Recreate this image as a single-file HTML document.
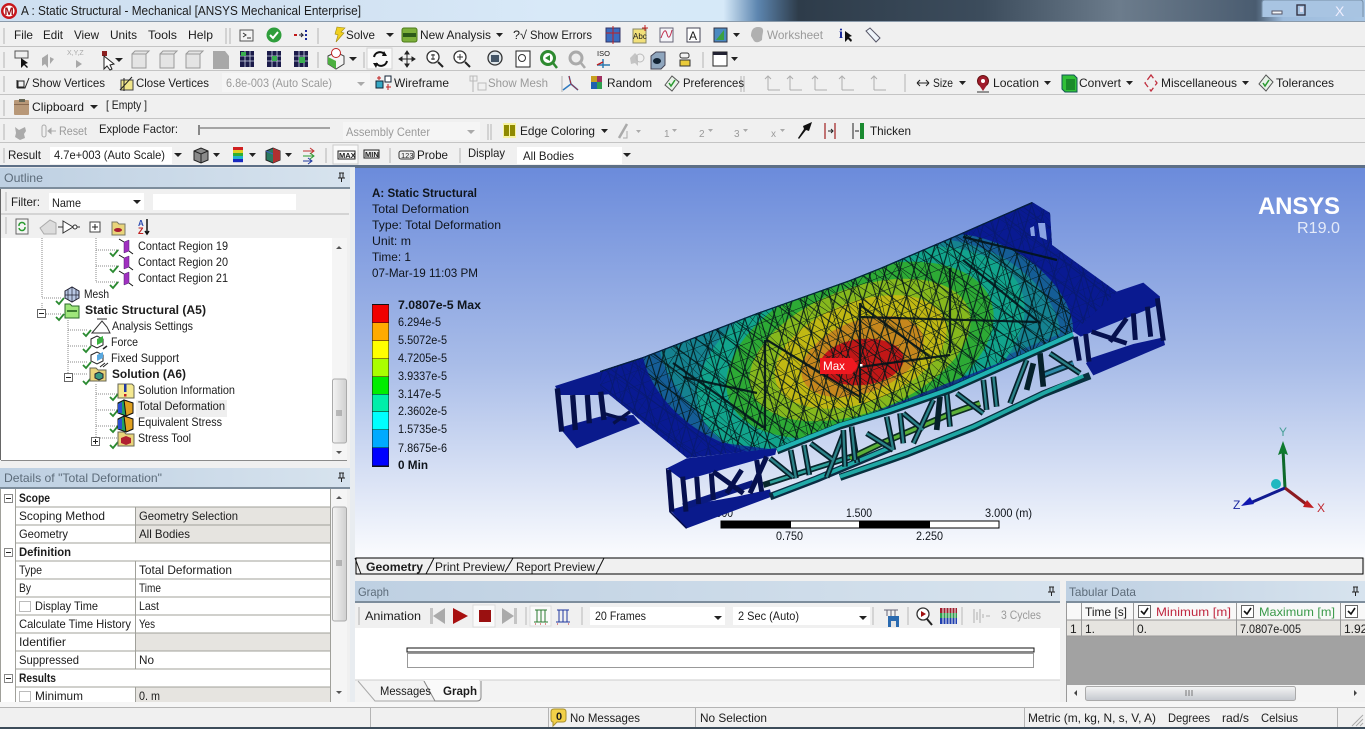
<!DOCTYPE html>
<html><head><meta charset="utf-8"><title>A : Static Structural - Mechanical</title>
<style>
html,body{margin:0;padding:0;width:1365px;height:729px;overflow:hidden;background:#f0f0f0}
svg{display:block;position:absolute;left:0;top:0}
text{font-family:"Liberation Sans",sans-serif;font-size:12px;fill:#1c1c1c}
.g{fill:#9a9a9a}.h{fill:#5d6c7a}.b{font-weight:bold}.d{fill:#10151c}
</style></head><body>
<svg width="1365" height="729" viewBox="0 0 1365 729" xmlns="http://www.w3.org/2000/svg">
<defs>
<linearGradient id="tb" x1="0" x2="1" y1="0" y2="0"><stop offset="0" stop-color="#cfe0f1"/><stop offset=".25" stop-color="#d2e2f2"/><stop offset=".4" stop-color="#d8e9f8"/><stop offset=".53" stop-color="#d6e9f8"/><stop offset=".555" stop-color="#5d86b0"/><stop offset=".585" stop-color="#2e3c4a"/><stop offset=".72" stop-color="#3c4c5c"/><stop offset=".82" stop-color="#6c7c8c"/><stop offset=".92" stop-color="#4a5c70"/><stop offset=".94" stop-color="#9dbbdc"/><stop offset="1" stop-color="#a9c6e4"/></linearGradient>
<linearGradient id="hd" x1="0" x2="1" y1="0" y2="0"><stop offset="0" stop-color="#bed0e2"/><stop offset="1" stop-color="#d7e3ee"/></linearGradient>
<linearGradient id="vp" x1="0" x2="0" y1="0" y2="1"><stop offset="0" stop-color="#6b8bdb"/><stop offset=".5" stop-color="#a8bce8"/><stop offset="1" stop-color="#fbfcfe"/></linearGradient>
<linearGradient id="sb" x1="0" x2="1" y1="0" y2="0"><stop offset="0" stop-color="#f4f4f4"/><stop offset="1" stop-color="#cfcfcf"/></linearGradient>
<linearGradient id="sh" x1="0" x2="0" y1="0" y2="1"><stop offset="0" stop-color="#f4f4f4"/><stop offset="1" stop-color="#c4c8ce"/></linearGradient>
<pattern id="m1" width="17" height="14" patternUnits="userSpaceOnUse" patternTransform="rotate(-21) skewX(25)"><path d="M0 0H17M0 0V14M0 14L17 0" stroke="#04181a" stroke-width=".8" fill="none"/></pattern>
<pattern id="m2" width="23" height="19" patternUnits="userSpaceOnUse" patternTransform="rotate(33)"><path d="M0 0H23M0 0V19M0 0L23 19" stroke="#04181a" stroke-width=".9" fill="none"/></pattern>
<pattern id="m3" width="29" height="25" patternUnits="userSpaceOnUse" patternTransform="rotate(78)"><path d="M0 0H29M0 25L29 0" stroke="#04181a" stroke-width=".9" fill="none"/></pattern>
<clipPath id="dk"><path d="M600,371L643,357L757,313L850,280L880,268L957,235L1032,202L1050,213L1052,245L1117,292L1073,332L950,387L890,408L840,423L777,448L687,458L600,387Z"/></clipPath>
</defs>

<!-- title bar -->
<rect width="1365" height="21" fill="url(#tb)"/>
<rect x="0" y="21" width="1365" height="1" fill="#8a9aaa"/>
<circle cx="9" cy="11" r="8" fill="#c8161c"/><circle cx="9" cy="11" r="5.500" fill="#fff"/><text x="4.500" y="15" class="b" style="font-size:11px;fill:#a01016">M</text>
<text x="21" y="15" textLength="340" lengthAdjust="spacingAndGlyphs" style="font-size:13px">A : Static Structural - Mechanical [ANSYS Mechanical Enterprise]</text>
<path d="M1262 17V3q0-3 3-3h95q3 0 3 3v14" fill="#a8c4e2" stroke="#7890a8"/>
<rect x="1272" y="11" width="10" height="3" fill="#f2f5f8" stroke="#556"/>
<rect x="1297" y="5" width="8" height="10" fill="none" stroke="#334" stroke-width="1.400"/><rect x="1300" y="7" width="3" height="5" fill="#dde"/>
<text x="1335" y="16" style="font-size:14px;fill:#eef">X</text>

<!-- toolbar separators -->
<g fill="#c4c4c4"><rect y="46" width="1365" height="1"/><rect y="70" width="1365" height="1"/><rect y="94" width="1365" height="1"/><rect y="118" width="1365" height="1"/><rect y="142" width="1365" height="1"/></g>
<rect x="0" y="165" width="1365" height="3" fill="#5d6f86"/>
<rect x="0" y="167" width="355" height="2" fill="#e2e6ea"/>
<g fill="none" stroke="#b4b4b4"><path d="M4 28V44M4 52V68M4 76V92M4 100V116M4 124V140M4 148V163M226 28V44M230 28V44M318 52V68M364 52V68M367 52V68M473 76V92M362 124V140M326 148V163M390 148V163M318 28V44M460 124V140M488 124V140M491 124V140M460 148V163M741 76V92M744 76V92M703 52V68M562 76V92"/></g>

<!-- row 1 -->
<text x="14" y="39" textLength="19" lengthAdjust="spacingAndGlyphs">File</text><text x="43" y="39" textLength="20" lengthAdjust="spacingAndGlyphs">Edit</text><text x="74" y="39" textLength="25" lengthAdjust="spacingAndGlyphs">View</text><text x="110" y="39" textLength="27" lengthAdjust="spacingAndGlyphs">Units</text><text x="148" y="39" textLength="29" lengthAdjust="spacingAndGlyphs">Tools</text><text x="188" y="39" textLength="25" lengthAdjust="spacingAndGlyphs">Help</text>
<rect x="240" y="30" width="13" height="11" fill="#f4f4f4" stroke="#555"/><path d="M243 33l3 2-3 2M247 38h4" stroke="#333" fill="none"/>
<circle cx="274" cy="35" r="7.500" fill="#2f9e3c"/><path d="M270 35l3 3 5-6" stroke="#fff" stroke-width="2" fill="none"/>
<path d="M294 35h3" stroke="#c01818" stroke-width="2"/><path d="M299 35h4l-2-2M303 35l-2 2" stroke="#223" fill="none"/><path d="M306 30v2M306 34v2M306 38v2" stroke="#1a2a9a" stroke-width="2"/>
<path d="M337 27l8 1-4 4 3 1-8 9 2-7-3-1z" fill="#f0d020" stroke="#a08a10" stroke-width=".6"/>
<text x="346" y="39" textLength="29" lengthAdjust="spacingAndGlyphs">Solve</text><path d="M386 33h8l-4 4z" fill="#222"/>
<rect x="402" y="28" width="15" height="14" rx="2" fill="#7cb03a" stroke="#4c7a1a"/><rect x="403" y="33" width="13" height="4" fill="#2c5a18"/>
<text x="420" y="39" textLength="71" lengthAdjust="spacingAndGlyphs">New Analysis</text><path d="M496 33h7l-3.500 4z" fill="#222"/>
<text x="513" y="39" textLength="14" lengthAdjust="spacingAndGlyphs">?√</text><text x="530" y="39" textLength="62" lengthAdjust="spacingAndGlyphs">Show Errors</text>
<rect x="606" y="28" width="14" height="14" fill="#3a6cc0" stroke="#336"/><path d="M606 33h14M613 26v18" stroke="#c02020"/>
<rect x="633" y="29" width="13" height="14" fill="#f2e07a" stroke="#886"/><text x="633" y="39" style="font-size:8px">Abc</text><path d="M645 25v6M642 28h6" stroke="#c02020"/>
<rect x="660" y="28" width="13" height="14" fill="#f4f4f8" stroke="#667"/><path d="M661 38q4-12 6-4t5-4" stroke="#c03050" fill="none"/>
<rect x="687" y="28" width="13" height="14" fill="#fff" stroke="#445"/><text x="689" y="40" style="font-size:12px">A</text>
<rect x="714" y="28" width="13" height="14" fill="#4a8ac0" stroke="#334"/><path d="M716 40l8-10v10z" fill="#3aa040"/><path d="M733 33h7l-3.500 4z" fill="#222"/>
<path d="M751 36q0-9 7-9 6 0 5 5-1 4-1 8-5 4-8 1z" fill="#b0b0b0"/>
<text x="767" y="39" textLength="56" lengthAdjust="spacingAndGlyphs" class="g">Worksheet</text>
<text x="839" y="38" class="b" style="font-size:14px;fill:#1a2a9a;font-family:'Liberation Serif',serif">i</text><path d="M845 31l0 11 3-3 3 3 1-2-3-3 3-1z" fill="#111"/>
<path d="M866 31l4-3 10 10-4 4z" fill="#eef4fa" stroke="#556"/>

<!-- row 2 -->
<rect x="15" y="51" width="13" height="7" fill="#eee" stroke="#555"/><path d="M21 58v10l3-3 3 3 1-1-3-3 3-1z" fill="#111"/>
<path d="M42 58l6-4v14l-3-4-3 2z M50 57l4 2-4 5z" fill="#a8a8a8"/>
<text x="67" y="55" style="font-size:7px;fill:#aaa">X,Y,Z</text><path d="M76 60v8l6-4z" fill="#a8a8a8"/>
<rect x="102" y="51" width="5" height="5" fill="#8c2020"/><path d="M104 56v13l3-3 3 4 2-1-2-4 4-1z" fill="#fff" stroke="#222"/><path d="M115 58h8l-4 4z" fill="#222"/>
<g fill="#e4e4e4" stroke="#9a9a9a"><path d="M132 54h14v14h-14zM132 54l3-3h14l-3 3"/><path d="M160 54h14v14h-14zM160 54l3-3h14l-3 3"/><path d="M186 54h14v14h-14zM186 54l3-3h14l-3 3"/></g>
<path d="M213 51h12l4 5v13h-16z" fill="#a8a8a8"/>
<g fill="#1b1b4a"><rect x="240" y="51" width="14" height="16"/><rect x="267" y="51" width="14" height="16"/><rect x="294" y="51" width="14" height="16"/></g>
<g stroke="#cfd6e8" stroke-width=".8"><path d="M240 56h14M240 61h14M245 51v16M250 51v16M267 56h14M267 61h14M272 51v16M277 51v16M294 56h14M294 61h14M299 51v16M304 51v16"/></g>
<rect x="241" y="52" width="5" height="4" fill="#3ab050"/><rect x="272" y="56" width="5" height="5" fill="#3ab050"/><rect x="299" y="57" width="6" height="6" fill="#3ab050"/>
<path d="M328 56l8-4 8 4v8l-8 5-8-5z" fill="#f4f4f4" stroke="#444"/><path d="M328 57l8 4v8l-8-5z" fill="#4cb040"/><circle cx="336" cy="53" r="4.500" fill="#fff" stroke="#c02020"/><path d="M349 57h8l-4 4z" fill="#222"/>
<rect x="367" y="48" width="25" height="21" fill="#fafafa" stroke="#d4d4d4"/>
<path d="M374 57a6 6 0 0 1 11-2M387 61a6 6 0 0 1-11 2" fill="none" stroke="#111" stroke-width="2"/><path d="M384 51l3 5-5 0zM376 68l-3-5 5 0z" fill="#111"/>
<path d="M407 51v16M399 59h16M407 51l-2 3h4zM407 67l-2-3h4zM399 59l3-2v4zM415 59l-3-2v4z" stroke="#222" fill="#222"/>
<circle cx="433" cy="57" r="6" fill="#fff" stroke="#333" stroke-width="1.300"/><path d="M438 62l5 5" stroke="#222" stroke-width="2"/><path d="M433 54v6M431 55h4M431 59h4" stroke="#333"/>
<circle cx="460" cy="57" r="6" fill="#fff" stroke="#333" stroke-width="1.300"/><path d="M465 62l5 5" stroke="#222" stroke-width="2"/><path d="M457 57h6M460 54v6" stroke="#333"/>
<circle cx="495" cy="58" r="7" fill="#dfe6ea" stroke="#333" stroke-width="1.300"/><rect x="491" y="55" width="8" height="7" fill="#456"/>
<rect x="516" y="51" width="14" height="16" fill="#fff" stroke="#222"/><circle cx="522" cy="58" r="3.500" fill="none" stroke="#333"/>
<circle cx="548" cy="58" r="6.500" fill="#fff" stroke="#2e8a30" stroke-width="3"/><path d="M545 58l5-3v6z" fill="#2e8a30"/><path d="M553 63l4 5" stroke="#2e8a30" stroke-width="2.500"/>
<circle cx="576" cy="58" r="6" fill="#eee" stroke="#aaa" stroke-width="3"/><path d="M581 63l4 5" stroke="#aaa" stroke-width="2.500"/>
<text x="597" y="56" style="font-size:7.500px">ISO</text><path d="M603 59v9M597 65h13" stroke="#2a7ab0" stroke-width="1.500"/><path d="M597 65l6-3" stroke="#c02020" stroke-width="1.500"/>
<path d="M630 58l5-5 3 3v10l-3-3-4 1z" fill="#c4c4c4"/><circle cx="640" cy="58" r="4" fill="none" stroke="#bbb"/>
<path d="M651 56l5-4h9v13l-4 4h-10z" fill="#8fa6be" stroke="#445"/><ellipse cx="657" cy="61" rx="4" ry="3" fill="#123"/>
<rect x="680" y="53" width="9" height="5" rx="2" fill="#f4f4f4" stroke="#333"/><rect x="680" y="60" width="10" height="6" fill="#eacb3a" stroke="#333"/>
<rect x="713" y="52" width="14" height="14" fill="#fff" stroke="#222"/><rect x="713" y="52" width="14" height="3" fill="#223"/><path d="M731 57h7l-3.500 4z" fill="#222"/>

<!-- row 3 -->
<path d="M17 88h8l4-10M17 80v8" stroke="#222" fill="none"/><rect x="18" y="81" width="6" height="6" fill="none" stroke="#222"/>
<text x="32" y="87" textLength="73" lengthAdjust="spacingAndGlyphs">Show Vertices</text>
<rect x="121" y="80" width="12" height="10" fill="#f0e58a" stroke="#444"/><path d="M120 90l12-13M124 78v13" stroke="#222"/>
<text x="136" y="87" textLength="73" lengthAdjust="spacingAndGlyphs">Close Vertices</text>
<rect x="222" y="73" width="148" height="19" fill="#f5f5f5"/><text x="226" y="87" textLength="106" lengthAdjust="spacingAndGlyphs" class="g">6.8e-003 (Auto Scale)</text><path d="M357 82h8l-4 4z" fill="#aaa"/>
<rect x="376" y="81" width="7" height="7" fill="#35a8c4" stroke="#123"/><rect x="385" y="76" width="6" height="6" fill="#fff" stroke="#123"/><path d="M377 78h4M379 76v4M386 87h5M388 84v6" stroke="#c02020"/>
<text x="394" y="87" textLength="55" lengthAdjust="spacingAndGlyphs">Wireframe</text>
<rect x="470" y="76" width="7" height="5" fill="none" stroke="#bbb"/><rect x="478" y="83" width="8" height="7" fill="none" stroke="#bbb"/>
<text x="488" y="87" textLength="60" lengthAdjust="spacingAndGlyphs" class="g">Show Mesh</text>
<path d="M569 76l2 8M571 84l-8 6M571 84l7 6" stroke="#2e7ac0" stroke-width="1.500"/><path d="M571 84l-2-8M571 84l7 6" stroke="#c02020" stroke-width=".8"/>
<rect x="591" y="76" width="6" height="6" fill="#c8a020"/><rect x="597" y="76" width="5" height="6" fill="#a03060"/><rect x="591" y="82" width="6" height="7" fill="#2060b0"/><rect x="597" y="82" width="5" height="7" fill="#30a050"/>
<text x="607" y="87" textLength="45" lengthAdjust="spacingAndGlyphs">Random</text>
<path d="M672 76l7 6-7 9-7-6z" fill="#e8f2e8" stroke="#555"/><path d="M669 83l2 3 4-6" stroke="#2a9a30" stroke-width="1.500" fill="none"/>
<text x="683" y="87" textLength="61" lengthAdjust="spacingAndGlyphs">Preferences</text>
<g fill="none" stroke="#aeaeae"><path d="M768 76v14M768 90h12M790 76v14M790 90h12M815 76v14M815 90h12M842 76v14M842 90h12M874 76v14M874 90h12"/><path d="M765 79l3-3 3 3M787 79l3-3 3 3M812 79l3-3 3 3M839 79l3-3 3 3M871 79l3-3 3 3"/></g>
<path d="M905 74v18" stroke="#b4b4b4"/>
<path d="M917 83h12M917 83l3-3M917 83l3 3M929 83l-3-3M929 83l-3 3" stroke="#222" fill="none"/>
<text x="933" y="87" textLength="20" lengthAdjust="spacingAndGlyphs">Size</text><path d="M959 81h7l-3.500 4z" fill="#222"/>
<circle cx="983" cy="81" r="5.500" fill="#a01c2c" stroke="#611"/><path d="M979 85l4 6 4-6z" fill="#a01c2c"/><circle cx="983" cy="81" r="2" fill="#fff"/><path d="M977 92h12" stroke="#333"/>
<text x="993" y="87" textLength="46" lengthAdjust="spacingAndGlyphs">Location</text><path d="M1044 81h7l-3.500 4z" fill="#222"/>
<path d="M1062 75h12l3 3v14h-12l-3-3z" fill="#30c038" stroke="#155"/><rect x="1066" y="79" width="9" height="11" fill="#198a2a"/>
<text x="1079" y="87" textLength="42" lengthAdjust="spacingAndGlyphs">Convert</text><path d="M1126 81h7l-3.500 4z" fill="#222"/>
<path d="M1151 75l-6 8 6 8 6-8z" fill="none" stroke="#c03040" stroke-width="1.300" stroke-dasharray="6 3"/>
<text x="1161" y="87" textLength="76" lengthAdjust="spacingAndGlyphs">Miscellaneous</text><path d="M1242 81h7l-3.500 4z" fill="#222"/>
<path d="M1266 75l7 7-7 9-7-7z" fill="#e8f2e8" stroke="#555"/><path d="M1263 83l2 3 4-6" stroke="#2a9a30" stroke-width="1.500" fill="none"/>
<text x="1276" y="87" textLength="58" lengthAdjust="spacingAndGlyphs">Tolerances</text>

<!-- row 4 -->
<rect x="14" y="100" width="15" height="15" rx="1" fill="#b89878"/><rect x="19" y="99" width="6" height="3" fill="#665"/><rect x="14" y="104" width="15" height="1" fill="#8a6a50"/>
<text x="32" y="111" textLength="52" lengthAdjust="spacingAndGlyphs">Clipboard</text><path d="M90 105h8l-4 4z" fill="#222"/>
<text x="106" y="109" textLength="41" lengthAdjust="spacingAndGlyphs">[ Empty ]</text>

<!-- row 5 -->
<path d="M15 127l4 3 6-3 1 4-2 3 1 4-5 2-5-3 1-4z" fill="#aaa"/>
<rect x="42" y="125" width="4" height="12" rx="2" fill="none" stroke="#aaa"/><path d="M48 131h8M48 131l3-2.500v5z" stroke="#aaa" fill="#aaa"/>
<text x="59" y="135" textLength="28" lengthAdjust="spacingAndGlyphs" class="g">Reset</text>
<text x="99" y="133" textLength="79" lengthAdjust="spacingAndGlyphs">Explode Factor:</text>
<path d="M199 128h131" stroke="#8a8a8a" stroke-width="1.500"/><path d="M199 125v10" stroke="#888" stroke-width="2"/>
<rect x="343" y="122" width="137" height="18" fill="#f5f5f5"/><text x="346" y="136" textLength="84" lengthAdjust="spacingAndGlyphs" class="g">Assembly Center</text><path d="M467 130h8l-4 4z" fill="#aaa"/>
<rect x="503" y="123" width="13" height="15" fill="#f7f3a0"/><rect x="504" y="125" width="5" height="11" fill="#8f8a00"/><rect x="510" y="125" width="5" height="11" fill="#8f8a00"/>
<text x="520" y="135" textLength="75" lengthAdjust="spacingAndGlyphs">Edge Coloring</text><path d="M601 129h7l-3.500 4z" fill="#222"/>
<path d="M619 138l8-14" stroke="#aaa" stroke-width="2.500"/><path d="M627 131v7h-4" stroke="#aaa" fill="none"/><path d="M636 130h5l-2.500 3z" fill="#aaa"/>
<text x="664" y="137" class="g" style="font-size:10px">1</text><text x="699" y="137" class="g" style="font-size:10px">2</text><text x="734" y="137" class="g" style="font-size:10px">3</text><text x="771" y="137" class="g" style="font-size:10px">x</text>
<path d="M672 129h5l-2.500 3zM708 129h5l-2.500 3zM743 129h5l-2.500 3zM780 129h5l-2.500 3z" fill="#aaa"/>
<path d="M798 138l6-9-1-3 9-4-3 9-3-1-7 9z" fill="#111"/>
<path d="M825 123v16M835 123v16" stroke="#a02020" stroke-width="1.200"/><path d="M828 131h5" stroke="#222"/><path d="M831 129l2 2-2 2" stroke="#222" fill="none"/>
<path d="M853 123v16" stroke="#222"/><rect x="860" y="123" width="4" height="16" fill="#1a8a30"/><path d="M855 131h4" stroke="#222"/>
<text x="870" y="135" textLength="41" lengthAdjust="spacingAndGlyphs">Thicken</text>

<!-- row 6 -->
<text x="8" y="159" textLength="33" lengthAdjust="spacingAndGlyphs">Result</text>
<rect x="50" y="147" width="122" height="17" fill="#fff"/>
<text x="54" y="159" textLength="111" lengthAdjust="spacingAndGlyphs">4.7e+003 (Auto Scale)</text><path d="M174 153h8l-4 4z" fill="#222"/>
<path d="M194 151l7-3 7 3v9l-7 3-7-3z" fill="#8a8a8a" stroke="#222"/><path d="M194 151l7 3 7-3M201 154v9" stroke="#222" fill="none"/><path d="M213 153h7l-3.500 4z" fill="#222"/>
<rect x="233" y="147" width="10" height="3.200" fill="#d02020"/><rect x="233" y="150" width="10" height="3.200" fill="#e0d020"/><rect x="233" y="153" width="10" height="3.200" fill="#30b030"/><rect x="233" y="156" width="10" height="3.200" fill="#20b0d0"/><rect x="233" y="159" width="10" height="3.200" fill="#1a2ac0"/>
<path d="M249 153h7l-3.500 4z" fill="#222"/>
<path d="M266 151l7-3 7 3v9l-7 3-7-3z" fill="#2a7a60" stroke="#222"/><path d="M273 148v15l7-3v-9z" fill="#b03030"/><path d="M266 151l7 3" stroke="#4060c0"/><path d="M285 153h7l-3.500 4z" fill="#222"/>
<path d="M303 151h11M310 148l4 3-4 3" stroke="#c03030" fill="none"/><path d="M303 156h11M310 153l4 3-4 3" stroke="#2a9a30" fill="none"/><path d="M303 161h9M308 158l4 3-4 3" stroke="#2038a0" fill="none"/>
<rect x="333" y="145" width="25" height="19" fill="#fafafa" stroke="#ccc"/>
<text x="339" y="158" class="b" style="font-size:7.500px">MAX</text><rect x="338" y="151" width="17" height="8" fill="none" stroke="#222"/>
<text x="365" y="157" class="b" style="font-size:7.500px">MIN</text><rect x="364" y="150" width="15" height="8" fill="none" stroke="#222"/>
<rect x="399" y="151" width="15" height="8" rx="2" fill="none" stroke="#333"/><text x="401" y="158" style="font-size:7.500px">123</text>
<text x="417" y="159" textLength="31" lengthAdjust="spacingAndGlyphs">Probe</text>
<text x="468" y="157" textLength="37" lengthAdjust="spacingAndGlyphs">Display</text>
<rect x="517" y="147" width="105" height="17" fill="#fff"/><text x="523" y="160" textLength="51" lengthAdjust="spacingAndGlyphs">All Bodies</text><path d="M623 153h8l-4 4z" fill="#222"/>

<!-- outline panel -->
<rect x="0" y="168" width="350" height="20" fill="url(#hd)"/><rect x="0" y="187" width="350" height="2" fill="#7d8d9c"/>
<text x="4" y="182" textLength="39" lengthAdjust="spacingAndGlyphs" class="h">Outline</text>
<path d="M339 173h5M340 173v5M343 173v5M338 178h7M341.500 178v4" stroke="#222" fill="none"/>
<rect x="0" y="189" width="349" height="25" fill="#f0f0f0"/>
<path d="M6 192v19M0 214h349" stroke="#b8b8b8"/>
<text x="11" y="206" textLength="29" lengthAdjust="spacingAndGlyphs">Filter:</text>
<rect x="49" y="193" width="95" height="17" fill="#fff"/><text x="52" y="207" textLength="29" lengthAdjust="spacingAndGlyphs">Name</text><path d="M133 200h8l-4 4z" fill="#222"/>
<rect x="153" y="194" width="143" height="16" fill="#fff"/>
<path d="M6 217v17" stroke="#b8b8b8"/>
<rect x="16" y="219" width="12" height="15" fill="#f4f4f4" stroke="#666"/><path d="M19 226a3 3 0 0 1 6-1M25 227a3 3 0 0 1-6 1" stroke="#2a9a30" stroke-width="1.500" fill="none"/>
<path d="M40 228l10-8 6 3v11H44z" fill="#dcdcdc" stroke="#aaa"/>
<path d="M63 221l10 6-10 6zM73 227h7M58 227h5" fill="#fff" stroke="#333"/><circle cx="75" cy="227" r="2" fill="#fff" stroke="#333"/>
<rect x="90" y="222" width="10" height="10" fill="#fff" stroke="#444"/><path d="M92 227h6M95 224v6" stroke="#222"/>
<path d="M112 222h5l2 2h6v11h-13z" fill="#e9d47a" stroke="#776"/><ellipse cx="118" cy="230" rx="4" ry="2" fill="#a81c30"/>
<text x="138" y="226" class="b" style="font-size:8px;fill:#2a4ab0">A</text><text x="138" y="234" class="b" style="font-size:9px;fill:#c02020">Z</text><path d="M147 219v15M145 231l2 3 2-3" stroke="#111" stroke-width="1.500" fill="none"/>

<rect x="0" y="238" width="332" height="222" fill="#fff"/>
<rect x="1" y="460" width="346" height="1" fill="#8a8a8a"/><path d="M0.500 189V460" stroke="#666"/>
<rect x="332" y="238" width="15" height="222" fill="#f5f5f5"/>
<rect x="332.500" y="379" width="14" height="64" rx="2" fill="url(#sb)" stroke="#aaa"/>
<path d="M336 411h6M336 413h6M336 415h6" stroke="#888"/>
<path d="M336 249l3-3 3 3zM336 451l3 3 3-3z" fill="#555"/>

<!-- tree -->
<g fill="none" stroke="#888" stroke-dasharray="1 1"><path d="M42 238V298M42 298H62M42 303V314M46 314H62M68 320V378M68 330H88M68 346H88M68 362H88M72 374H88M96 238V282M96 250H120M96 266H120M96 282H120M96 384V438M96 394H120M96 410H120M96 426H120M100 438H120"/></g>
<g fill="#fff" stroke="#666"><rect x="37.500" y="309.500" width="8" height="8"/><rect x="64.500" y="373.500" width="8" height="8"/><rect x="91.500" y="437.500" width="8" height="8"/></g>
<path d="M39 313.500h5M66 377.500h5M93 441.500h5M95.500 439v5" stroke="#222"/>
<g fill="#a030c0" stroke="#502070" stroke-width=".5"><path d="M124 242l5-2v11l-5 2z"/><path d="M124 258l5-2v11l-5 2z"/><path d="M124 274l5-2v11l-5 2z"/></g>
<g stroke="#111" fill="none"><path d="M119 239l5 3M129 251l4 3M119 255l5 3M129 267l4 3M119 271l5 3M129 283l4 3"/></g>
<g fill="none" stroke="#2a8a30" stroke-width="1.800"><path d="M110 253l3 3 5-6M110 269l3 3 5-6M110 285l3 3 5-6M56 301l3 3 5-6M56 317l3 3 5-6M83 333l3 3 5-6M83 349l3 3 5-6M83 365l3 3 5-6M83 381l3 3 5-6M110 397l3 3 5-6M110 413l3 3 5-6M110 429l3 3 5-6M110 445l3 3 5-6"/></g>
<path d="M65 291l7-4 7 4v7l-7 4-7-4z" fill="#b9c8e4" stroke="#223"/><path d="M65 295h14M72 287v15M68 289v11M76 289v11" stroke="#223" stroke-width=".7"/>
<path d="M65 304h5l2 2h7v12H65z" fill="#9fe67c" stroke="#2a6a2a"/><path d="M67 311h10" stroke="#1a5a1a" stroke-width="1.500"/>
<path d="M97 319h10M92 333l10-12 5 6 3 6z" fill="#fff" stroke="#333"/><path d="M92 333h14" stroke="#333"/>
<path d="M91 339l6-3 6 3v6l-6 3-6-3z" fill="#fff" stroke="#222"/><path d="M97 339l6-3v6l-6 3z" fill="#3ab040"/><path d="M103 349l4-3" stroke="#222" stroke-width="1.500"/>
<path d="M91 355l6-3 6 3v6l-6 3-6-3z" fill="#fff" stroke="#222"/><path d="M97 355l6-3v6l-6 3z" fill="#58a8e0"/><path d="M100 367l5-4M103 367l5-4" stroke="#222"/>
<path d="M90 368h6l2 2h8v11H90z" fill="#e9d47a" stroke="#665"/><path d="M95 374l4-2 4 2v4l-4 2-4-2z" fill="#3a9a80" stroke="#223"/>
<path d="M118 384h14l2 2v12h-16z" fill="#f4e890" stroke="#665"/><rect x="124" y="384" width="2.500" height="8" fill="#2038a0"/><rect x="124" y="394" width="2.500" height="2.500" fill="#c02020"/>
<g stroke="#111"><path d="M118 403l6-3 9 3v10l-7 3-8-3z" fill="#20a060"/><path d="M124 400l9 3v10l-7 3z" fill="#e0a020"/><path d="M118 419l6-3 9 3v10l-7 3-8-3z" fill="#20a060"/><path d="M124 416l9 3v10l-7 3z" fill="#e0a020"/></g>
<path d="M118 404l4-2v11l-4 0zM118 420l4-2v11l-4 0z" fill="#2a50d0"/>
<path d="M118 432h6l2 2h8v12h-16z" fill="#e9d47a" stroke="#665"/><path d="M121 438l5-2 5 2v5l-5 2-5-2z" fill="#b02030"/>
<rect x="136" y="400" width="91" height="17" fill="#efefef"/>
<text x="138" y="250" textLength="90" lengthAdjust="spacingAndGlyphs">Contact Region 19</text><text x="138" y="266" textLength="90" lengthAdjust="spacingAndGlyphs">Contact Region 20</text><text x="138" y="282" textLength="90" lengthAdjust="spacingAndGlyphs">Contact Region 21</text>
<text x="84" y="298" textLength="25" lengthAdjust="spacingAndGlyphs">Mesh</text>
<text x="85" y="314" textLength="121" lengthAdjust="spacingAndGlyphs" class="b">Static Structural (A5)</text>
<text x="112" y="330" textLength="81" lengthAdjust="spacingAndGlyphs">Analysis Settings</text>
<text x="111" y="346" textLength="27" lengthAdjust="spacingAndGlyphs">Force</text>
<text x="111" y="362" textLength="68" lengthAdjust="spacingAndGlyphs">Fixed Support</text>
<text x="112" y="378" textLength="74" lengthAdjust="spacingAndGlyphs" class="b">Solution (A6)</text>
<text x="138" y="394" textLength="97" lengthAdjust="spacingAndGlyphs">Solution Information</text>
<text x="138" y="410" textLength="87" lengthAdjust="spacingAndGlyphs">Total Deformation</text>
<text x="138" y="426" textLength="84" lengthAdjust="spacingAndGlyphs">Equivalent Stress</text>
<text x="138" y="442" textLength="53" lengthAdjust="spacingAndGlyphs">Stress Tool</text>

<!-- details -->
<rect x="0" y="468" width="350" height="20" fill="url(#hd)"/><rect x="0" y="487" width="350" height="2" fill="#7d8d9c"/>
<text x="4" y="482" textLength="158" lengthAdjust="spacingAndGlyphs" class="h">Details of "Total Deformation"</text>
<path d="M339 473h5M340 473v5M343 473v5M338 478h7M341.500 478v4" stroke="#222" fill="none"/>
<rect x="0" y="489" width="331" height="213" fill="#fff"/>
<rect x="135" y="507" width="196" height="36" fill="#e6e4e0"/><rect x="135" y="633" width="196" height="18" fill="#e6e4e0"/><rect x="135" y="687" width="196" height="15" fill="#e6e4e0"/>
<path d="M15 507H331M15 525H331M15 543H331M15 561H331M15 579H331M15 597H331M15 615H331M15 633H331M15 651H331M15 669H331M15 687H331M135.500 507V543M135.500 561V669M135.500 687V702M15.500 489V702M330.500 489V702M0.500 489V702" stroke="#a0a09a" fill="none"/>
<g fill="#fff" stroke="#888"><rect x="4.500" y="494.500" width="8" height="8"/><rect x="4.500" y="548.500" width="8" height="8"/><rect x="4.500" y="674.500" width="8" height="8"/></g>
<path d="M6 498.500h5M6 552.500h5M6 678.500h5" stroke="#222"/>
<g fill="#fff" stroke="#bbb"><rect x="19.500" y="601.500" width="11" height="10"/><rect x="19.500" y="691.500" width="11" height="10"/></g>
<rect x="331" y="489" width="16" height="213" fill="#f5f5f5"/>
<rect x="332.500" y="507" width="14" height="114" rx="2" fill="url(#sb)" stroke="#aaa"/>
<path d="M336 561h6M336 563h6M336 565h6" stroke="#888"/>
<path d="M336 499l3-3 3 3zM336 691l3 3 3-3z" fill="#555"/>
<text x="19" y="502" textLength="31" lengthAdjust="spacingAndGlyphs" class="b">Scope</text>
<text x="19" y="520" textLength="86" lengthAdjust="spacingAndGlyphs">Scoping Method</text><text x="139" y="520" textLength="99" lengthAdjust="spacingAndGlyphs">Geometry Selection</text>
<text x="19" y="538" textLength="49" lengthAdjust="spacingAndGlyphs">Geometry</text><text x="139" y="538" textLength="51" lengthAdjust="spacingAndGlyphs">All Bodies</text>
<text x="19" y="556" textLength="52" lengthAdjust="spacingAndGlyphs" class="b">Definition</text>
<text x="19" y="574" textLength="23" lengthAdjust="spacingAndGlyphs">Type</text><text x="139" y="574" textLength="93" lengthAdjust="spacingAndGlyphs">Total Deformation</text>
<text x="19" y="592" textLength="12" lengthAdjust="spacingAndGlyphs">By</text><text x="139" y="592" textLength="22" lengthAdjust="spacingAndGlyphs">Time</text>
<text x="35" y="610" textLength="63" lengthAdjust="spacingAndGlyphs">Display Time</text><text x="139" y="610" textLength="20" lengthAdjust="spacingAndGlyphs">Last</text>
<text x="19" y="628" textLength="112" lengthAdjust="spacingAndGlyphs">Calculate Time History</text><text x="139" y="628" textLength="16" lengthAdjust="spacingAndGlyphs">Yes</text>
<text x="19" y="646" textLength="47" lengthAdjust="spacingAndGlyphs">Identifier</text>
<text x="19" y="664" textLength="60" lengthAdjust="spacingAndGlyphs">Suppressed</text><text x="139" y="664" textLength="15" lengthAdjust="spacingAndGlyphs">No</text>
<text x="19" y="682" textLength="37" lengthAdjust="spacingAndGlyphs" class="b">Results</text>
<text x="35" y="700" textLength="48" lengthAdjust="spacingAndGlyphs">Minimum</text><text x="139" y="700" textLength="21" lengthAdjust="spacingAndGlyphs">0. m</text>
<rect x="350" y="168" width="5" height="540" fill="#e8ecf0"/>

<!-- viewport -->
<rect x="355" y="168" width="1010" height="390" fill="url(#vp)"/>
<text x="372" y="197" textLength="105" lengthAdjust="spacingAndGlyphs" class="b d">A: Static Structural</text>
<text x="372" y="213" textLength="97" lengthAdjust="spacingAndGlyphs" class="d">Total Deformation</text>
<text x="372" y="229" textLength="129" lengthAdjust="spacingAndGlyphs" class="d">Type: Total Deformation</text>
<text x="372" y="245" textLength="39" lengthAdjust="spacingAndGlyphs" class="d">Unit: m</text>
<text x="372" y="261" textLength="39" lengthAdjust="spacingAndGlyphs" class="d">Time: 1</text>
<text x="372" y="277" textLength="106" lengthAdjust="spacingAndGlyphs" class="d">07-Mar-19 11:03 PM</text>
<rect x="372" y="304" width="17" height="163" fill="#111"/>
<rect x="372.500" y="305" width="16" height="17.500" fill="#f00000"/><rect x="372.500" y="323" width="16" height="17.500" fill="#ffaa00"/><rect x="372.500" y="341" width="16" height="17.500" fill="#ffff00"/><rect x="372.500" y="359" width="16" height="17.500" fill="#aaff00"/><rect x="372.500" y="377" width="16" height="17" fill="#00ee00"/><rect x="372.500" y="394.500" width="16" height="17" fill="#00eeaa"/><rect x="372.500" y="412" width="16" height="17.500" fill="#00ffff"/><rect x="372.500" y="430" width="16" height="17.500" fill="#00aaff"/><rect x="372.500" y="448" width="16" height="17.500" fill="#0000ff"/>
<text x="398" y="309" textLength="83" lengthAdjust="spacingAndGlyphs" class="b d">7.0807e-5 Max</text>
<text x="398" y="326" textLength="43" lengthAdjust="spacingAndGlyphs" class="d">6.294e-5</text>
<text x="398" y="344" textLength="49" lengthAdjust="spacingAndGlyphs" class="d">5.5072e-5</text>
<text x="398" y="362" textLength="49" lengthAdjust="spacingAndGlyphs" class="d">4.7205e-5</text>
<text x="398" y="380" textLength="49" lengthAdjust="spacingAndGlyphs" class="d">3.9337e-5</text>
<text x="398" y="398" textLength="43" lengthAdjust="spacingAndGlyphs" class="d">3.147e-5</text>
<text x="398" y="415" textLength="49" lengthAdjust="spacingAndGlyphs" class="d">2.3602e-5</text>
<text x="398" y="433" textLength="49" lengthAdjust="spacingAndGlyphs" class="d">1.5735e-5</text>
<text x="398" y="452" textLength="49" lengthAdjust="spacingAndGlyphs" class="d">7.8675e-6</text>
<text x="398" y="469" textLength="30" lengthAdjust="spacingAndGlyphs" class="b d">0 Min</text>
<text x="1258" y="214" textLength="82" lengthAdjust="spacing" class="b" style="font-size:24px;fill:#fff">ANSYS</text>
<text x="1297" y="233" textLength="43" lengthAdjust="spacingAndGlyphs" style="font-size:16px;fill:#e4eaf8">R19.0</text>

<!-- scale label hidden partly by the model -->
<text x="707" y="517" textLength="26" lengthAdjust="spacingAndGlyphs" class="d">0.000</text>

<!-- model: left stub -->
<g transform="translate(550,280) scale(.33333)" fill="none">
<path d="M15 318L150 275L280 232L330 330L150 345L30 345Z" fill="#0a1a8c"/>
<path d="M30 445L80 505L270 430L250 405L150 410L40 440Z" fill="#0a1a8c"/>
<path d="M22 325L35 455M68 345L76 450M112 345L118 430M152 335L162 420" stroke="#06104a" stroke-width="16"/>
<path d="M160 400L230 420M190 430L240 395" stroke="#06104a" stroke-width="10"/>
</g>

<!-- truss (left part) -->
<g transform="translate(550,280) scale(.33333)" fill="none">
<path d="M350 565L410 535L680 503L676 524L400 602Z" fill="#0a1a90"/>
<path d="M360 690L410 745L665 650L660 628L560 650L400 678Z" fill="#0a1a8c"/>
<path d="M400 680L610 610" stroke="#0a1a80" stroke-width="20"/>
<path d="M640 615L800 563L930 522" stroke="#08282e" stroke-width="18"/><path d="M660 608L800 563L930 522" stroke="#2ea09a" stroke-width="8"/>
<path d="M660 650L800 597L1020 505" stroke="#0a2c42" stroke-width="22"/><path d="M670 645L800 595L1020 503" stroke="#22aaa8" stroke-width="11"/>
<path d="M356 570L366 695M398 590L408 695M440 590L446 672M484 580L490 660M620 540L635 635M650 530L600 640M490 575L580 640M575 570L530 640" stroke="#06104e" stroke-width="15"/>
<path d="M660 535L730 592M722 510L738 595M762 495L778 585M782 490L852 542M880 462L830 592M905 445L922 548" stroke="#06202a" stroke-width="17"/>
<path d="M660 535L730 592M722 510L738 595M762 495L778 585M782 490L852 542M880 462L830 592M905 445L922 548" stroke="#2c8288" stroke-width="7"/>
<path d="M350 565L360 695L410 745" stroke="#060e50" stroke-width="5"/>
</g>
<!-- truss (right part) -->
<g transform="translate(840,190) scale(.33333)" fill="none">
<path d="M30 805L120 762L330 672L420 640" stroke="#0c2e20" stroke-width="20"/><path d="M30 805L120 762L330 672L420 640" stroke="#5cb038" stroke-width="10"/>
<path d="M610 555L700 520" stroke="#0c3040" stroke-width="20"/><path d="M610 555L700 520" stroke="#2c8aa8" stroke-width="9"/>
<path d="M0 862L200 792L400 712L610 612L750 557" stroke="#08303e" stroke-width="22"/><path d="M0 860L200 790L400 710L610 610L730 558" stroke="#20a8a4" stroke-width="11"/>
<path d="M10 720L15 830M35 710L45 810M80 730L160 780M140 680L160 780M180 670L190 760M190 670L250 720M280 630L220 760M300 620L290 720M320 610L330 710M350 610L430 670M430 570L440 660M460 560L470 650M560 510L510 640M580 520L560 600M600 490L610 590M630 490L720 550" stroke="#06202a" stroke-width="17"/>
<path d="M10 720L15 830M35 710L45 810M80 730L160 780M140 680L160 780M180 670L190 760M190 670L250 720M280 630L220 760M320 610L330 710M350 610L430 670M430 570L440 660M460 560L470 650M560 510L510 640M630 490L720 550" stroke="#2c8288" stroke-width="7"/>
<!-- right end -->
<path d="M700 425L830 305L910 278L960 320L956 345L722 440Z" fill="#0a1a90"/>
<path d="M738 520L760 556L975 465L970 442L880 462L750 505Z" fill="#0a1a8c"/>
<path d="M706 440L718 512M737 432L747 515M880 370L886 450M922 350L932 440M952 325L970 452" stroke="#06104e" stroke-width="15"/>
<path d="M755 425L860 460M860 385L810 455" stroke="#06104e" stroke-width="14"/>
</g>

<!-- deck -->
<g clip-path="url(#dk)">
<rect x="590" y="195" width="540" height="270" fill="#0c1ea4"/>
<path d="M643,357C650,390 680,425 723,443L777,450L1073,334C1076,300 1040,262 1007,247C990,240 972,234 957,234L850,270Z" fill="#1a6cb0"/>
<path d="M660,352C668,385 695,418 735,435L790,442L1060,334C1060,305 1030,272 1000,256C985,249 970,243 950,240L850,275Z" fill="#1a98a8"/>
<g transform="rotate(-21 860 350)">
<ellipse cx="860" cy="352" rx="172" ry="92" fill="#16c0a4"/>
<ellipse cx="860" cy="350" rx="140" ry="78" fill="#36c83c"/>
<ellipse cx="860" cy="350" rx="116" ry="62" fill="#a0d820"/>
<ellipse cx="860" cy="352" rx="90" ry="50" fill="#e6d814"/>
<ellipse cx="860" cy="357" rx="64" ry="36" fill="#ec9e20"/>
</g>
<ellipse cx="862" cy="362" rx="42" ry="23" transform="rotate(-6 862 362)" fill="#e61818"/>
<rect x="590" y="195" width="540" height="270" fill="url(#m1)"/>
<rect x="590" y="195" width="540" height="270" fill="url(#m2)"/>
<rect x="590" y="195" width="540" height="270" fill="url(#m3)"/>
<rect x="590" y="195" width="540" height="270" fill="#001010" opacity=".16"/>
<!-- calm the mesh on the dark-blue end zones -->
<path fill-rule="evenodd" d="M590 195H1130V465H590ZM643,357C650,390 680,425 723,443L777,450L1073,334C1076,300 1040,262 1007,247C990,240 972,234 957,234L850,270Z" fill="#0a1a94" opacity=".72"/>
<g stroke="#03141a" stroke-width="2.200" fill="none" opacity=".9">
<path d="M765 340V430M860 303V403M950 268V353M673 363L763 427M683 377L757 393M767 340L860 397M860 305L930 357M860 317L1037 322M963 260L1040 323M963 237L1057 260M860 367L950 355"/>
</g>
<path d="M1038,223L1045,223L1047,240L1040,237Z" fill="#8aa2e4"/><path d="M1030,228L1034,226L1035,236L1031,236Z" fill="#8aa2e4"/>
<path d="M600,371L643,357L757,313L850,280L880,268L957,235L1032,202" fill="none" stroke="#06203a" stroke-width="2.500"/>
</g>
<!-- top chord -->
<path d="M777,451L840,426L890,411L950,390L1073,335" fill="none" stroke="#08303c" stroke-width="7"/>
<path d="M777,450L840,425L890,410L950,389L1073,334" fill="none" stroke="#1fb2b2" stroke-width="4"/>

<path d="M820,358H852L858,366L852,374H820Z" fill="#f01820"/>
<text x="823" y="370" textLength="22" lengthAdjust="spacingAndGlyphs" style="fill:#fff">Max</text>
<rect x="860" y="364" width="2.500" height="2.500" fill="#fff"/>

<!-- scale -->
<rect x="721" y="521" width="278" height="7" fill="#fff" stroke="#000"/>
<rect x="721" y="521" width="70" height="7" fill="#000"/><rect x="859" y="521" width="71" height="7" fill="#000"/>
<text x="846" y="517" textLength="26" lengthAdjust="spacingAndGlyphs" class="d">1.500</text>
<text x="985" y="517" textLength="47" lengthAdjust="spacingAndGlyphs" class="d">3.000 (m)</text>
<text x="776" y="540" textLength="27" lengthAdjust="spacingAndGlyphs" class="d">0.750</text>
<text x="916" y="540" textLength="27" lengthAdjust="spacingAndGlyphs" class="d">2.250</text>

<!-- triad -->
<path d="M1285 488L1283 450" stroke="#0e6a2a" stroke-width="3"/><path d="M1283 441l5 14-5-2-5 2z" fill="#0e7a2e"/>
<path d="M1285 488L1250 503" stroke="#101a90" stroke-width="3"/><path d="M1241 506l9-9 4 7z" fill="#1018b0"/>
<path d="M1285 488L1306 504" stroke="#8c1a20" stroke-width="3"/><path d="M1314 508l-11-1 4-7z" fill="#c01c20"/>
<circle cx="1276" cy="484" r="5" fill="#20b8c0"/>
<text x="1279" y="436" style="fill:#4aa098">Y</text><text x="1233" y="509" style="fill:#1a28a0">Z</text><text x="1317" y="512" style="fill:#c02830">X</text>

<!-- view tabs -->
<rect x="356" y="558" width="1007" height="16" fill="#f0f0f0" stroke="#000"/>
<path d="M355 558l6 16M426 574l8-16M505 572l8-14M596 574l8-16" stroke="#111" fill="none"/>
<text x="366" y="571" textLength="57" lengthAdjust="spacingAndGlyphs" class="b">Geometry</text>
<text x="435" y="571" textLength="70" lengthAdjust="spacingAndGlyphs">Print Preview</text>
<text x="516" y="571" textLength="79" lengthAdjust="spacingAndGlyphs">Report Preview</text>

<!-- graph -->
<rect x="355" y="581" width="705" height="20" fill="url(#hd)"/><rect x="355" y="601" width="705" height="2" fill="#7d8d9c"/>
<text x="358" y="596" textLength="31" lengthAdjust="spacingAndGlyphs" class="h">Graph</text>
<path d="M1049 587h5M1050 587v5M1053 587v5M1048 592h7M1051.500 592v4" stroke="#222" fill="none"/>
<rect x="355" y="603" width="705" height="25" fill="#f0f0f0"/>
<rect x="355" y="628" width="705" height="52" fill="#fff"/>
<path d="M359 607v18" stroke="#b0b0b0"/>
<text x="365" y="620" textLength="56" lengthAdjust="spacingAndGlyphs">Animation</text>
<rect x="430" y="608" width="3" height="16" fill="#c4c4c4"/><path d="M445 608v16l-12-8z" fill="#aaa"/>
<path d="M453 608l15 8-15 8z" fill="#a81010"/>
<rect x="473" y="605" width="22" height="22" fill="#fafafa" stroke="#ddd"/><rect x="479" y="610" width="12" height="12" fill="#9a1010"/>
<path d="M502 608l12 8-12 8z" fill="#aaa"/><rect x="514" y="608" width="3" height="16" fill="#c4c4c4"/>
<path d="M526 607v18" stroke="#b8b8b8"/><rect x="530" y="606" width="21" height="20" fill="#fafafa" stroke="#ddd"/>
<path d="M535 610h12M537 610v12M541 610v12M545 610v12M534 622h14" stroke="#2a7a30" fill="none"/><path d="M535 624h1M540 624h1M545 624h1" stroke="#c02020"/>
<path d="M557 610h12M559 610v12M563 610v12M567 610v12M556 622h14" stroke="#2038a0" fill="none"/><path d="M557 624h1M568 624h1" stroke="#c02020"/>
<path d="M582 607v18" stroke="#b8b8b8"/>
<rect x="590" y="607" width="135" height="18" fill="#fff"/><rect x="733" y="607" width="137" height="18" fill="#fff"/>
<text x="595" y="620" textLength="51" lengthAdjust="spacingAndGlyphs">20 Frames</text><path d="M714 616h8l-4 4z" fill="#222"/>
<text x="738" y="620" textLength="61" lengthAdjust="spacingAndGlyphs">2 Sec (Auto)</text><path d="M859 616h8l-4 4z" fill="#222"/>
<path d="M873 607v18M908 607v18M962 607v18" stroke="#b8b8b8"/>
<path d="M884 610h14M887 610v6M891 610v6M895 610v6" stroke="#667" fill="none"/><rect x="888" y="616" width="11" height="11" fill="#2a6ab0"/><rect x="891" y="621" width="5" height="6" fill="#e4e4e4"/>
<circle cx="923" cy="614" r="6" fill="#fff" stroke="#333" stroke-width="1.300"/><path d="M921 611l5 3-5 3z" fill="#a01010"/><path d="M927 619l5 6" stroke="#222" stroke-width="2"/>
<rect x="940" y="608" width="17" height="5" fill="#a02030"/><rect x="940" y="613" width="17" height="5" fill="#30a050"/><rect x="940" y="618" width="17" height="6" fill="#2040b0"/><path d="M943 608v16M946 608v16M949 608v16M952 608v16M955 608v16" stroke="#f0f0f0"/>
<path d="M974 609v14M977 612v8M980 609v14M983 614v4M986 616h4" stroke="#b0b0b0"/>
<text x="1001" y="619" textLength="40" lengthAdjust="spacingAndGlyphs" class="g">3 Cycles</text>
<rect x="407" y="648" width="627" height="4" fill="#fff" stroke="#111"/>
<rect x="407.500" y="653.500" width="626" height="14" fill="#fff" stroke="#999"/>
<rect x="355" y="680" width="705" height="22" fill="#f3f3f3"/><path d="M355 680H1060" stroke="#ccc"/>
<path d="M358 681l17 20h61l-12-20" fill="#f3f3f3" stroke="#aaa"/>
<path d="M424 681l11 20h44V680H424" fill="#fafafa" stroke="none"/><path d="M424 681l11 20h42q4 0 4-4v-16" fill="none" stroke="#888"/>
<text x="380" y="695" textLength="51" lengthAdjust="spacingAndGlyphs">Messages</text>
<text x="443" y="695" textLength="34" lengthAdjust="spacingAndGlyphs" class="b">Graph</text>

<!-- tabular -->
<rect x="1066" y="581" width="299" height="20" fill="url(#hd)"/><rect x="1066" y="601" width="299" height="2" fill="#7d8d9c"/>
<text x="1069" y="596" textLength="67" lengthAdjust="spacingAndGlyphs" class="h">Tabular Data</text>
<path d="M1353 587h5M1354 587v5M1357 587v5M1352 592h7M1355.500 592v4" stroke="#222" fill="none"/>
<rect x="1066" y="603" width="299" height="17" fill="#f8f8f8"/>
<rect x="1066" y="620" width="299" height="17" fill="#e6e4e0"/>
<rect x="1066" y="636" width="299" height="49" fill="#a2a2a2"/>
<rect x="1066" y="685" width="299" height="17" fill="#f4f4f4"/>
<rect x="1085.500" y="686.500" width="210" height="14" rx="2" fill="url(#sh)" stroke="#aaa"/>
<path d="M1186 690v6M1189 690v6M1192 690v6" stroke="#777"/>
<path d="M1077 690v6l-3-3zM1354 690v6l3-3z" fill="#444"/>
<path d="M1066.500 603V702M1081.500 603V636M1133.500 603V636M1236.500 603V636M1340.500 603V636M1066 620H1365M1066 636H1365" stroke="#999" fill="none"/>
<g fill="#fff" stroke="#666"><rect x="1138.500" y="605.500" width="12" height="12"/><rect x="1241.500" y="605.500" width="12" height="12"/><rect x="1345.500" y="605.500" width="12" height="12"/></g>
<path d="M1141 611l3 3 4-6M1244 611l3 3 4-6M1348 611l3 3 4-6" stroke="#111" stroke-width="1.600" fill="none"/>
<text x="1085" y="616" textLength="42" lengthAdjust="spacingAndGlyphs">Time [s]</text>
<text x="1156" y="616" textLength="75" lengthAdjust="spacingAndGlyphs" style="fill:#c02840">Minimum [m]</text>
<text x="1259" y="616" textLength="76" lengthAdjust="spacingAndGlyphs" style="fill:#3a9a4a">Maximum [m]</text>
<text x="1070" y="633">1</text><text x="1085" y="633">1.</text><text x="1137" y="633">0.</text>
<text x="1240" y="633" textLength="61" lengthAdjust="spacingAndGlyphs">7.0807e-005</text><text x="1344" y="633">1.92</text>

<!-- status bar -->
<rect x="0" y="702" width="1365" height="6" fill="#f6f6f6"/>
<rect x="0" y="708" width="1365" height="19" fill="#f0f0f0"/>
<rect x="0" y="727" width="1365" height="2" fill="#3c4c5a"/>
<path d="M0 707.500H1365" stroke="#b4b4b4"/>
<path d="M370.500 708V727M548.500 708V727M695.500 708V727M1024.500 708V727M1337.500 708V727" stroke="#b4b4b4"/>
<path d="M551 712q0-3 3-3h9q3 0 3 3v7q0 3-3 3h-6l-4 4v-4q-2 0-2-3z" fill="#f2d048" stroke="#a8902c"/>
<text x="556" y="720" class="b" style="font-size:11px">0</text>
<text x="570" y="722" textLength="70" lengthAdjust="spacingAndGlyphs">No Messages</text>
<text x="700" y="722" textLength="67" lengthAdjust="spacingAndGlyphs">No Selection</text>
<text x="1028" y="722" textLength="128" lengthAdjust="spacingAndGlyphs">Metric (m, kg, N, s, V, A)</text>
<text x="1168" y="722" textLength="42" lengthAdjust="spacingAndGlyphs">Degrees</text>
<text x="1222" y="722" textLength="27" lengthAdjust="spacingAndGlyphs">rad/s</text>
<text x="1261" y="722" textLength="37" lengthAdjust="spacingAndGlyphs">Celsius</text>
<path d="M1352 726l11-11M1356 726l7-7M1360 726l3-3" stroke="#aaa"/>
</svg>
</body></html>
